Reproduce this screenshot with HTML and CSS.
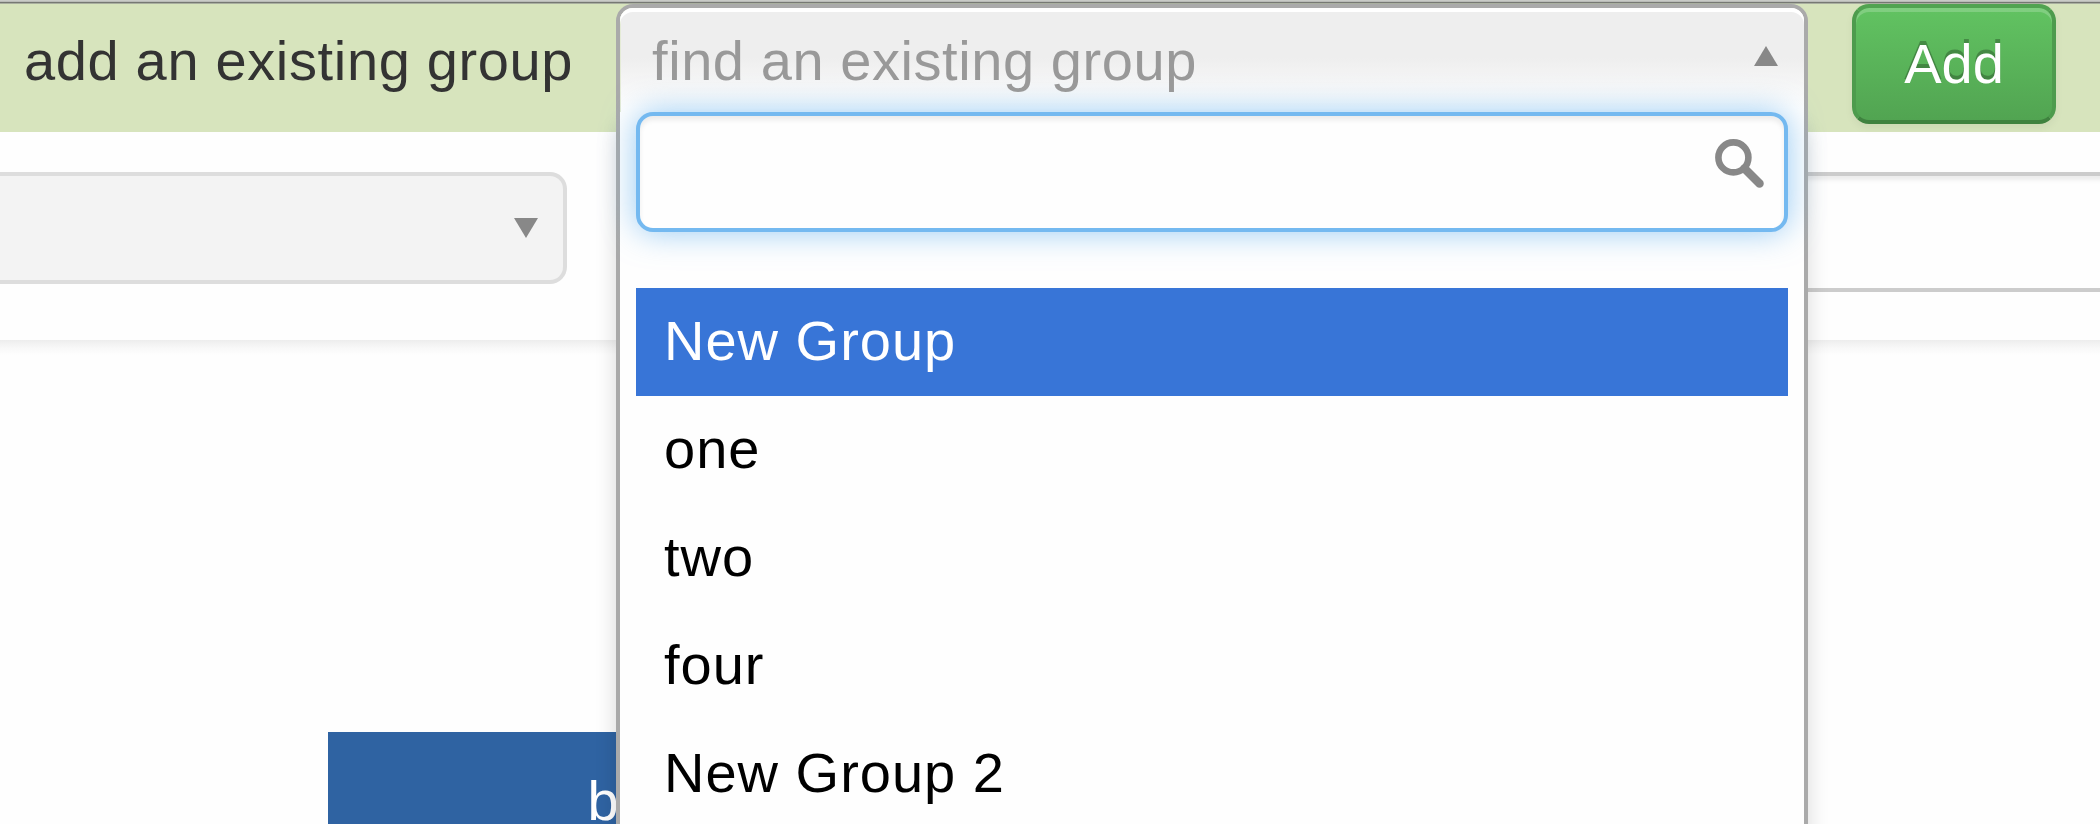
FILE: index.html
```html
<!DOCTYPE html>
<html lang="en">
<head>
<meta charset="utf-8">
<title>Groups</title>
<link rel="stylesheet" href="styles.css">
</head>
<body>
<header class="toolbar">
  <div class="toolbar-label">add an existing group</div>
  <div class="picker">
    <div class="picker-drop">
      <div class="picker-choice">
        <span class="picker-placeholder">find an existing group</span>
        <svg class="arrow-up" viewBox="0 0 24 20"><path d="M12 0 24 20H0Z"/></svg>
      </div>
      <div class="search">
        <svg class="search-icon" viewBox="0 0 50 50"><circle cx="18.4" cy="18.4" r="15"/><path d="M29.5 29.5 44.5 44.5"/></svg>
      </div>
      <ul class="results">
        <li class="result active">New Group</li>
        <li class="result">one</li>
        <li class="result">two</li>
        <li class="result">four</li>
        <li class="result">New Group 2</li>
      </ul>
    </div>
  </div>
  <button class="add" type="button">Add</button>
</header>
<section class="filters">
  <div class="select"><svg class="arrow-down" viewBox="0 0 24 20"><path d="M0 0H24L12 20Z"/></svg></div>
  <div class="field"></div>
</section>
<main class="content">
  <div class="node">b</div>
</main>
</body>
</html>
```
FILE: styles.css
```css
* { box-sizing: border-box; }

body {
  margin: 0;
  width: 2100px;
  height: 824px;
  overflow: hidden;
  background: #fefefe;
  font-family: "Liberation Sans", Arial, sans-serif;
  font-size: 56px;
  letter-spacing: 0.65px;
  color: #333;
}

.toolbar {
  display: flex;
  align-items: flex-start;
  height: 131.5px;
  background: linear-gradient(#c9cbc7 0 1px, #b9bbb7 1px 2px, #767873 2px 3px, #a9afa0 3px 4px, #d7e4bd 4px);
}

.toolbar-label {
  width: 616px;
  padding: 29px 0 0 24px;
  line-height: 64px;
  white-space: nowrap;
}

.picker {
  position: relative;
  width: 1192px;
  height: 824px;
}

.picker-drop {
  position: absolute;
  z-index: 2;
  top: 4px;
  left: 0;
  width: 1192px;
  height: 860px;
  border: 4px solid #aaa;
  border-radius: 17px;
  background: #fefefe;
  box-shadow: 0 121px 21px rgba(0, 0, 0, 0.15);
}

.picker-choice {
  display: flex;
  justify-content: space-between;
  height: 103.5px;
  padding: 21px 26px 0 32px;
  border-radius: 13px 13px 0 0;
  background: linear-gradient(#eee 0, #eee 50px, #fefefe 100px);
  box-shadow: inset 0 4px 0 #fff, inset 1px 0 0 #e4ebd6;
  line-height: 64px;
  letter-spacing: 0.57px;
  color: #999;
  white-space: nowrap;
}

.arrow-up, .arrow-down {
  width: 24px;
  height: 20px;
  fill: #888;
}

.arrow-up { margin-top: 16.5px; }

.search {
  display: flex;
  justify-content: flex-end;
  height: 120px;
  margin: 0 16px 56px;
  padding: 23.5px 19px 0 0;
  border: 4px solid #74b9f0;
  border-radius: 17px;
  background: #fefefe;
  box-shadow: inset 0 4px 5px rgba(0, 0, 0, 0.075), 0 0 32px rgba(82, 168, 236, 0.6);
}

.search-icon {
  width: 50px;
  height: 50px;
  fill: none;
  stroke: #888;
  stroke-width: 6.6;
}

.search-icon path { stroke-width: 8.5; stroke-linecap: round; }

.results {
  margin: 0 16px;
  padding: 0;
  list-style: none;
  letter-spacing: 1px;
  color: #000;
}

.result {
  height: 108px;
  padding: 21px 0 0 28px;
  line-height: 64px;
}

.result.active {
  background: #3875d7;
  color: #fff;
}

.add {
  width: 204px;
  height: 120px;
  margin: 3.5px 0 0 44px;
  padding: 0;
  border: 4px solid;
  border-color: #51a351 #4d9b4d #3f823f;
  border-radius: 17px;
  background: linear-gradient(#62c462, #51a351) border-box;
  box-shadow: inset 0 4px 0 rgba(255, 255, 255, 0.2), 0 4px 8px rgba(0, 0, 0, 0.05);
  font: inherit;
  letter-spacing: 0;
  color: #fff;
  text-shadow: 0 -4px 0 rgba(0, 0, 0, 0.25);
}

.filters {
  display: flex;
  justify-content: space-between;
  height: 208.5px;
  padding-top: 40.5px;
}

.select {
  display: flex;
  justify-content: flex-end;
  width: 567px;
  height: 112px;
  padding: 41.5px 25.5px 0 0;
  border: 4px solid #ddd;
  border-left: 0;
  border-radius: 0 17px 17px 0;
  background: #f3f3f3;
}

.field {
  width: 420px;
  height: 120px;
  margin-right: -20px;
  border: 4px solid #ccc;
  background: #fefefe;
  box-shadow: inset 0 4px 4px rgba(0, 0, 0, 0.075);
}

.content {
  height: 484px;
  padding: 392px 0 0 327.5px;
  background: linear-gradient(#ededed, #f8f8f8 8px, #fefefe 15px);
}

.node {
  width: 560px;
  height: 130px;
  padding: 37px 0 0 260px;
  background: #2f63a2;
  line-height: 64px;
  color: #fff;
}
```
